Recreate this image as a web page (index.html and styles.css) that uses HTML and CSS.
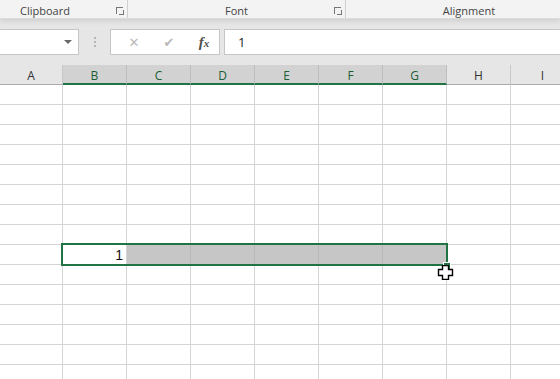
FILE: index.html
```html
<!DOCTYPE html>
<html lang="en">
<head>
    <meta charset="UTF-8">
    <title>Sheet</title>
    <link rel="stylesheet" href="styles.css">
</head>
<body>
    <div class="ribbon">
        <div class="group group-clipboard">
            <span class="group-label">Clipboard</span>
            <span class="launcher"></span>
        </div>
        <div class="group group-font">
            <span class="group-label">Font</span>
            <span class="launcher"></span>
        </div>
        <div class="group group-align">
            <span class="group-label">Alignment</span>
        </div>
    </div>

    <div class="formula-bar">
        <div class="name-box">
            <span class="dropdown"></span>
        </div>
        <div class="grip">
            <span></span><span></span><span></span>
        </div>
        <div class="fx-buttons">
            <span class="fx-btn cancel">&#x2715;</span>
            <span class="fx-btn enter">&#x2714;</span>
            <span class="fx-btn fx"><i>f</i><i class="x">x</i></span>
        </div>
        <div class="formula-input">1</div>
    </div>

    <div class="sheet">
        <div class="grid" id="grid"></div>
        <div class="selection"></div>
        <div class="fill-handle"></div>
        <svg class="cursor" width="17" height="15" viewBox="0 0 17 15">
            <path d="M5.5 0.5 H11.5 V4.5 H15.5 V10.5 H11.5 V14.5 H5.5 V10.5 H1.5 V4.5 H5.5 Z" fill="#fff" stroke="#000" stroke-width="1.4"/>
        </svg>
    </div>

    <script>
        const cols = ['A', 'B', 'C', 'D', 'E', 'F', 'G', 'H', 'I'];
        const grid = document.getElementById('grid');
        const selectedCols = ['B', 'C', 'D', 'E', 'F', 'G'];

        cols.forEach(c => {
            const h = document.createElement('div');
            h.className = 'col-head' + (selectedCols.includes(c) ? ' sel' : '');
            h.textContent = c;
            grid.appendChild(h);
        });

        for (let r = 1; r <= 15; r++) {
            cols.forEach(c => {
                const cell = document.createElement('div');
                cell.className = 'cell';
                if (r === 9 && selectedCols.includes(c) && c !== 'B') cell.className += ' hl';
                if (r === 9 && c === 'B') cell.textContent = '1';
                grid.appendChild(cell);
            });
        }
    </script>
</body>
</html>
```

FILE: styles.css
```css
body {
    margin: 0;
    width: 560px;
    height: 379px;
    overflow: hidden;
    background: #fff;
    font-family: "Open Sans", "Noto Sans", sans-serif;
}

/* ribbon group labels */
.ribbon {
    display: flex;
    height: 18px;
    background: #f3f3f3;
    border-bottom: 1px solid #dcdcdc;
    box-shadow: 0 2px 5px rgba(0,0,0,0.1);
    position: relative;
    z-index: 1;
}

.group {
    position: relative;
    display: flex;
    justify-content: center;
    align-items: center;
    font-size: 11px;
    color: #444;
}

.group-clipboard {
    width: 128px;
    border-right: 1px solid #d0d0d0;
    justify-content: flex-start;
    padding-left: 20px;
    box-sizing: border-box;
}

.group-font {
    width: 217px;
    border-right: 1px solid #d0d0d0;
}

.group-align {
    flex: 1;
    padding-left: 32px;
}

.group-label {
    margin-top: 2px;
}

.launcher {
    position: absolute;
    right: 4px;
    top: 7px;
    width: 6px;
    height: 6px;
    border-left: 1px solid #777;
    border-top: 1px solid #777;
}

.launcher::after {
    content: "";
    position: absolute;
    right: -1px;
    bottom: -1px;
    width: 4px;
    height: 4px;
    border-right: 1px solid #777;
    border-bottom: 1px solid #777;
}

/* formula bar */
.formula-bar {
    display: flex;
    align-items: flex-start;
    height: 46px;
    padding-top: 10px;
    box-sizing: border-box;
    background: #e6e6e6;
}

.name-box {
    width: 79px;
    height: 26px;
    background: #fff;
    border: 1px solid #c6c6c6;
    border-left: none;
    box-sizing: border-box;
    position: relative;
}

.dropdown {
    position: absolute;
    right: 6px;
    top: 10px;
    border-left: 4px solid transparent;
    border-right: 4px solid transparent;
    border-top: 4px solid #6a6a6a;
}

.grip {
    width: 31px;
    display: flex;
    flex-direction: column;
    align-items: center;
    gap: 2px;
    padding-top: 8px;
}

.grip span {
    width: 2px;
    height: 2px;
    background: #b5b5b5;
}

.fx-buttons {
    width: 110px;
    height: 26px;
    background: #fff;
    border: 1px solid #c6c6c6;
    box-sizing: border-box;
    display: flex;
    align-items: center;
    padding-left: 14px;
    gap: 17px;
}

.fx-btn {
    width: 18px;
    text-align: center;
    color: #b9b9b9;
    font-size: 13px;
    font-family: "DejaVu Sans", sans-serif;
}

.fx-btn.fx {
    color: #505050;
    font-family: "Liberation Serif", serif;
    font-size: 15px;
    font-weight: bold;
}

.fx-btn.fx .x {
    font-size: 11px;
}

.formula-input {
    flex: 1;
    height: 26px;
    margin-left: 4px;
    background: #fff;
    border: 1px solid #c6c6c6;
    border-right: none;
    box-sizing: border-box;
    padding-left: 13px;
    font-size: 13px;
    line-height: 24px;
    color: #222;
}

/* sheet grid */
.sheet {
    position: relative;
    height: 315px;
    overflow: hidden;
}

.grid {
    display: grid;
    grid-template-columns: 63px repeat(8, 64px);
    grid-auto-rows: 20px;
}

.col-head {
    background: #e6e6e6;
    border-right: 1px solid #c8c8c8;
    border-bottom: 1px solid #ababab;
    box-sizing: border-box;
    display: flex;
    align-items: center;
    justify-content: center;
    font-size: 12px;
    color: #333;
    padding-top: 1px;
}

.col-head.sel {
    background: #d2d2d2;
    border-right-color: #bdbdbd;
    border-bottom: 2px solid #217346;
    color: #1b5e36;
    padding-top: 2px;
}

.cell {
    border-right: 1px solid #d4d4d4;
    border-bottom: 1px solid #d4d4d4;
    box-sizing: border-box;
    font-family: "Liberation Sans", sans-serif;
    font-size: 14px;
    text-align: right;
    padding-right: 3px;
    line-height: 20px;
    color: #111;
}

.cell.hl {
    background: #c6c6c6;
    border-color: #b9b9b9;
}

.selection {
    position: absolute;
    left: 61px;
    top: 178px;
    width: 387px;
    height: 23px;
    border: 2px solid #217346;
    box-sizing: border-box;
}

.fill-handle {
    position: absolute;
    left: 443px;
    top: 197px;
    width: 6px;
    height: 6px;
    background: #217346;
    border: 1px solid #fff;
}

.cursor {
    position: absolute;
    left: 437px;
    top: 200px;
}
```
